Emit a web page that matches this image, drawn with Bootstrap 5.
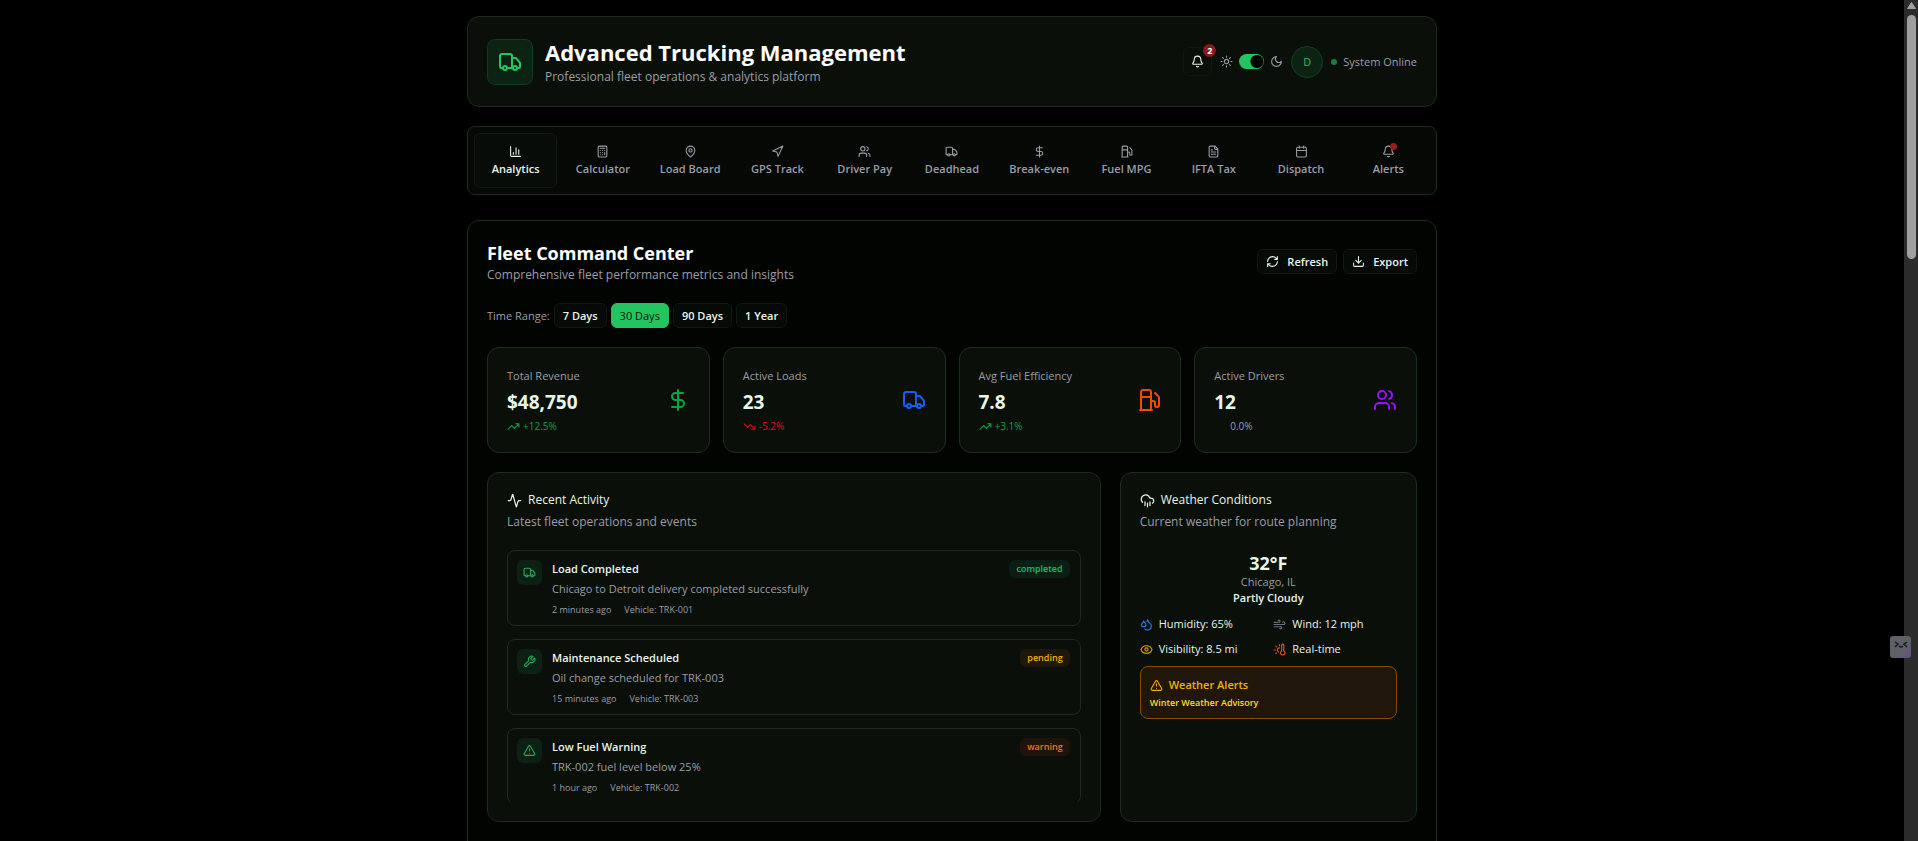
<!DOCTYPE html>
<html lang="en" data-bs-theme="dark">
<head>
<meta charset="utf-8">
<meta name="viewport" content="width=device-width, initial-scale=1">
<title>Advanced Trucking Management</title>
<link href="https://cdn.jsdelivr.net/npm/bootstrap@5.3.0/dist/css/bootstrap.min.css" rel="stylesheet">
<style>
  :root { --line:#1a2e1a; --panel:#0a0f0a; --ink:#e8f5e8; --dim:#9c9ca8; --go:#22c55e; }
  html { overflow:hidden; }
  body { background:#000; color:var(--ink); font-family:"Open Sans","Noto Sans",sans-serif; font-size:12px; line-height:16px; }
  .viewport { height:100vh; overflow:hidden; }
  .shell { max-width:970px; padding-top:16px; }
  .ico { width:13px; height:13px; flex:none; fill:none; stroke:currentColor; stroke-width:2; stroke-linecap:round; stroke-linejoin:round; display:block; }
  .ico-md { width:15px; height:15px; }
  .ico-lg { width:24px; height:24px; }
  .dim { color:var(--dim); }
  .semi { font-weight:600; }
  .medium { font-weight:500; }
  .t9 { font-size:9px; line-height:13px; }
  .t10 { font-size:10px; line-height:13px; }
  .t11 { font-size:11px; }
  .gap-ico { gap:6px; }
  .panel { background:var(--panel); border:1px solid var(--line); border-radius:12px; }
  .pad { padding:19px; }
  .top-bar { height:91px; padding:0 19px; }
  .brand { gap:12px; }
  .brand-sub { line-height:20px; }
  .tools { gap:8px; }
  .logo-box { width:46px; height:46px; background:#0c2213; border:1px solid #123a1f; border-radius:8px; color:var(--go); }
  .main-title { font-size:22px; line-height:30px; font-weight:700; margin:0; }
  .sec-title { font-size:18px; line-height:27px; font-weight:700; margin:0; }
  .ghost { display:flex; align-items:center; justify-content:center; height:25px; padding:0 8px; background:#050a07; border:1px solid #0e1a10; border-radius:6px; color:var(--ink); font-size:11px; line-height:16px; font-weight:600; }
  .ghost.chosen { background:var(--go); border-color:var(--go); color:#04140a; font-weight:400; }
  .ghost.with-icon { gap:8px; }
  .bell { width:29px; height:29px; padding:0; background:#0a0f0a; position:relative; }
  .count { position:absolute; top:-4px; right:-5px; width:13px; height:13px; border-radius:50%; background:#7f1d1d; color:#fff; font-size:9px; line-height:13px; font-weight:700; }
  .form-check-input.theme-switch { width:25px; height:15px; margin:0; float:none; border:0; box-shadow:none; border-radius:8px; background-color:var(--go); background-image:radial-gradient(circle at 18px 50%, #000 6px, transparent 7px) !important; }
  .avatar { width:32px; height:32px; border-radius:50%; background:#0c2213; border:1px solid #173d22; color:var(--go); font-size:11px; padding:0; }
  .dot { width:6px; height:6px; border-radius:50%; background:#15803d; }
  .tabs { background:#050805; border:1px solid var(--line); border-radius:8px; padding:6px; gap:4px; margin-top:19px; }
  .tabs .nav-link { flex:1 1 0; height:55px; padding:0; border:1px solid transparent; border-radius:6px; color:var(--dim); font-size:11px; line-height:16px; font-weight:600; display:flex; flex-direction:column; align-items:center; justify-content:center; gap:3px; white-space:nowrap; }
  .tabs .nav-link.active { background:#070c08; border-color:#0f1a10; color:var(--ink); }
  .ping { position:absolute; top:-2px; right:-2px; width:7px; height:7px; border-radius:50%; background:#9b1c1f; }
  .command { background:#020402; margin-top:25px; padding:19px 19px 80px; }
  .range { margin:20px 0 19px; gap:4px; }
  .stat { height:106px; padding:19px; }
  .stat-value { font-size:19px; line-height:22px; font-weight:700; margin:7px 0; }
  .trend { gap:3px; }
  .stats { --bs-gutter-x:13px; }
  .boards { --bs-gutter-x:19px; margin-top:19px; }
  .boards .panel { height:350px; }
  .board-sub { margin-top:6px; }
  .feed { height:252px; overflow:hidden; margin-top:20px; gap:13px; }
  .event { flex:none; height:76px; border:1px solid var(--line); border-radius:8px; padding:9px 10px 9px 9px; gap:10px; }
  .event-icon { width:25px; height:25px; border-radius:6px; background:#0c2013; color:#1fae55; flex:none; }
  .event-name { font-size:11px; line-height:18px; font-weight:600; }
  .event-text { font-size:11px; margin:3px 0 6px; color:var(--dim); }
  .event-meta { gap:13px; }
  .tag { height:18px; padding:0 7px; border-radius:6px; font-size:9px; line-height:18px; font-weight:600; }
  .tag-done { background:#0a1e13; color:#05c765; }
  .tag-wait { background:#1f170a; color:#f0b100; }
  .tag-warn { background:#20130a; color:#e87a05; }
  .now { margin-top:22px; }
  .temp { font-size:18px; line-height:22px; font-weight:700; }
  .readings { margin-top:10px; row-gap:9px; }
  .readings .second { padding-left:5px; }
  .alert-box { border:1px solid #894b00; border-radius:8px; background:#20170a; color:#f0b100; padding:10px 9px 9px; margin-top:9px; }
  .advisory { margin-top:3px; color:#fddc20; }
  .scroll-rail { width:14px; height:100vh; background:#2b2b2b; flex:none; padding:2px 3px 0 3px; }
  .scroll-thumb { width:9px; height:244px; border-radius:5px; background:#9f9f9f; margin-top:6px; }
  .buddy { position:fixed; right:7px; top:636px; width:21px; height:22px; border:0; padding:0; border-radius:3px; background:linear-gradient(135deg,#5d6166 55%,#6b4f86); color:#17191e; }
</style>
</head>
<body>
<svg class="d-none" xmlns="http://www.w3.org/2000/svg">
  <symbol id="truck" viewBox="0 0 24 24"><path d="M14 18V6a2 2 0 0 0-2-2H4a2 2 0 0 0-2 2v11a1 1 0 0 0 1 1h2M15 18H9M19 18h2a1 1 0 0 0 1-1v-3.65a1 1 0 0 0-.22-.624l-3.48-4.35A1 1 0 0 0 17.52 8H14"/><circle cx="17" cy="18" r="2"/><circle cx="7" cy="18" r="2"/></symbol>
  <symbol id="bell" viewBox="0 0 24 24"><path d="M10.268 21a2 2 0 0 0 3.464 0M3.262 15.326A1 1 0 0 0 4 17h16a1 1 0 0 0 .74-1.673C19.41 13.956 18 12.499 18 8A6 6 0 0 0 6 8c0 4.499-1.411 5.956-2.738 7.326"/></symbol>
  <symbol id="sun" viewBox="0 0 24 24"><circle cx="12" cy="12" r="4"/><path d="M12 2v2M12 20v2M4.93 4.93l1.41 1.41M17.66 17.66l1.41 1.41M2 12h2M20 12h2M6.34 17.66l-1.41 1.41M19.07 4.93l-1.41 1.41"/></symbol>
  <symbol id="moon" viewBox="0 0 24 24"><path d="M12 3a6 6 0 0 0 9 9 9 9 0 1 1-9-9Z"/></symbol>
  <symbol id="chart" viewBox="0 0 24 24"><path d="M3 3v16a2 2 0 0 0 2 2h16M18 17V9M13 17V5M8 17v-3"/></symbol>
  <symbol id="calc" viewBox="0 0 24 24"><rect width="16" height="20" x="4" y="2" rx="2"/><path d="M8 6h8M16 14v4M16 10h.01M12 10h.01M8 10h.01M12 14h.01M8 14h.01M12 18h.01M8 18h.01"/></symbol>
  <symbol id="pin" viewBox="0 0 24 24"><path d="M20 10c0 4.993-5.539 10.193-7.399 11.799a1 1 0 0 1-1.202 0C9.539 20.193 4 14.993 4 10a8 8 0 0 1 16 0"/><circle cx="12" cy="10" r="3"/></symbol>
  <symbol id="nav" viewBox="0 0 24 24"><path d="M3 11 22 2l-9 19-2-8-8-2z"/></symbol>
  <symbol id="users" viewBox="0 0 24 24"><path d="M16 21v-2a4 4 0 0 0-4-4H6a4 4 0 0 0-4 4v2M16 3.128a4 4 0 0 1 0 7.744M22 21v-2a4 4 0 0 0-3-3.87"/><circle cx="9" cy="7" r="4"/></symbol>
  <symbol id="dollar" viewBox="0 0 24 24"><path d="M12 2v20M17 5H9.5a3.5 3.5 0 0 0 0 7h5a3.5 3.5 0 0 1 0 7H6"/></symbol>
  <symbol id="fuel" viewBox="0 0 24 24"><path d="M3 22h12M4 9h10M14 22V4a2 2 0 0 0-2-2H6a2 2 0 0 0-2 2v18M14 13h2a2 2 0 0 1 2 2v2a2 2 0 0 0 4 0V9.83a2 2 0 0 0-.59-1.42L18 5"/></symbol>
  <symbol id="file" viewBox="0 0 24 24"><path d="M15 2H6a2 2 0 0 0-2 2v16a2 2 0 0 0 2 2h12a2 2 0 0 0 2-2V7ZM14 2v4a2 2 0 0 0 2 2h4M10 9H8M16 13H8M16 17H8"/></symbol>
  <symbol id="cal" viewBox="0 0 24 24"><path d="M8 2v4M16 2v4M3 10h18"/><rect width="18" height="18" x="3" y="4" rx="2"/></symbol>
  <symbol id="refresh" viewBox="0 0 24 24"><path d="M3 12a9 9 0 0 1 9-9 9.75 9.75 0 0 1 6.74 2.74L21 8M21 3v5h-5M21 12a9 9 0 0 1-9 9 9.75 9.75 0 0 1-6.74-2.74L3 16M8 16H3v5"/></symbol>
  <symbol id="download" viewBox="0 0 24 24"><path d="M21 15v4a2 2 0 0 1-2 2H5a2 2 0 0 1-2-2v-4M7 10l5 5 5-5M12 15V3"/></symbol>
  <symbol id="up" viewBox="0 0 24 24"><path d="M22 7l-8.5 8.5-5-5L2 17M16 7h6v6"/></symbol>
  <symbol id="down" viewBox="0 0 24 24"><path d="M22 17l-8.5-8.5-5 5L2 7M16 17h6v-6"/></symbol>
  <symbol id="pulse" viewBox="0 0 24 24"><path d="M22 12h-2.48a2 2 0 0 0-1.93 1.46l-2.35 8.36a.25.25 0 0 1-.48 0L9.24 2.18a.25.25 0 0 0-.48 0l-2.35 8.36A2 2 0 0 1 4.49 12H2"/></symbol>
  <symbol id="wrench" viewBox="0 0 24 24"><path d="M14.7 6.3a1 1 0 0 0 0 1.4l1.6 1.6a1 1 0 0 0 1.4 0l3.77-3.77a6 6 0 0 1-7.94 7.94l-6.91 6.91a2.12 2.12 0 0 1-3-3l6.91-6.91a6 6 0 0 1 7.94-7.94l-3.76 3.76z"/></symbol>
  <symbol id="warn" viewBox="0 0 24 24"><path d="m21.73 18-8-14a2 2 0 0 0-3.48 0l-8 14A2 2 0 0 0 4 21h16a2 2 0 0 0 1.73-3M12 9v4M12 17h.01"/></symbol>
  <symbol id="rain" viewBox="0 0 24 24"><path d="M4 14.899A7 7 0 1 1 15.71 8h1.79a4.5 4.5 0 0 1 2.5 8.242M16 14v6M8 14v6M12 16v6"/></symbol>
  <symbol id="drops" viewBox="0 0 24 24"><path d="M7 16.3c2.2 0 4-1.83 4-4.05 0-1.16-.57-2.26-1.71-3.19S7.29 6.75 7 5.3c-.29 1.45-1.14 2.84-2.29 3.76S3 11.1 3 12.25c0 2.22 1.8 4.05 4 4.05zM12.56 6.6A10.97 10.97 0 0 0 14 3.02c.5 2.5 2 4.9 4 6.5s3 3.5 3 5.5a6.98 6.98 0 0 1-11.91 4.97"/></symbol>
  <symbol id="wind" viewBox="0 0 24 24"><path d="M17.7 7.7a2.5 2.5 0 1 1 1.8 4.3H2M9.6 4.6A2 2 0 1 1 11 8H2M12.6 19.4A2 2 0 1 0 14 16H2"/></symbol>
  <symbol id="eye" viewBox="0 0 24 24"><path d="M2.062 12.348a1 1 0 0 1 0-.696 10.75 10.75 0 0 1 19.876 0 1 1 0 0 1 0 .696 10.75 10.75 0 0 1-19.876 0"/><circle cx="12" cy="12" r="3"/></symbol>
  <symbol id="thermo" viewBox="0 0 24 24"><path d="M12 9a4 4 0 0 0-2 7.5M12 3v2M6.6 18.4l-1.4 1.4M20 4v10.54a4 4 0 1 1-4 0V4a2 2 0 0 1 4 0ZM4 13H2M6.34 7.34 4.93 5.93"/></symbol>
</svg>

<div class="viewport d-flex">
  <div class="flex-grow-1 overflow-hidden">
    <div class="shell mx-auto">

      <header class="panel top-bar d-flex align-items-center justify-content-between">
        <div class="brand d-flex align-items-center">
          <div class="logo-box d-flex align-items-center justify-content-center"><svg class="ico ico-lg"><use href="#truck"/></svg></div>
          <div>
            <h1 class="main-title">Advanced Trucking Management</h1>
            <div class="dim brand-sub">Professional fleet operations &amp; analytics platform</div>
          </div>
        </div>
        <div class="tools d-flex align-items-center dim">
          <button type="button" class="ghost bell" aria-label="Notifications"><svg class="ico"><use href="#bell"/></svg><span class="count">2</span></button>
          <div class="d-flex align-items-center gap-ico">
            <svg class="ico"><use href="#sun"/></svg>
            <input class="form-check-input theme-switch" type="checkbox" role="switch" aria-label="Dark mode" checked>
            <svg class="ico"><use href="#moon"/></svg>
          </div>
          <button type="button" class="avatar">D</button>
          <div class="d-flex align-items-center gap-ico"><span class="dot"></span><span class="t11">System Online</span></div>
        </div>
      </header>

      <nav class="tabs nav flex-nowrap">
        <a class="nav-link active" href="#"><svg class="ico"><use href="#chart"/></svg>Analytics</a>
        <a class="nav-link" href="#"><svg class="ico"><use href="#calc"/></svg>Calculator</a>
        <a class="nav-link" href="#"><svg class="ico"><use href="#pin"/></svg>Load Board</a>
        <a class="nav-link" href="#"><svg class="ico"><use href="#nav"/></svg>GPS Track</a>
        <a class="nav-link" href="#"><svg class="ico"><use href="#users"/></svg>Driver Pay</a>
        <a class="nav-link" href="#"><svg class="ico"><use href="#truck"/></svg>Deadhead</a>
        <a class="nav-link" href="#"><svg class="ico"><use href="#dollar"/></svg>Break-even</a>
        <a class="nav-link" href="#"><svg class="ico"><use href="#fuel"/></svg>Fuel MPG</a>
        <a class="nav-link" href="#"><svg class="ico"><use href="#file"/></svg>IFTA Tax</a>
        <a class="nav-link" href="#"><svg class="ico"><use href="#cal"/></svg>Dispatch</a>
        <a class="nav-link" href="#"><span class="position-relative"><svg class="ico"><use href="#bell"/></svg><span class="ping"></span></span>Alerts</a>
      </nav>

      <main class="panel command">
        <div class="d-flex align-items-center justify-content-between">
          <div>
            <h2 class="sec-title">Fleet Command Center</h2>
            <div class="dim">Comprehensive fleet performance metrics and insights</div>
          </div>
          <div class="d-flex gap-ico">
            <button type="button" class="ghost with-icon"><svg class="ico"><use href="#refresh"/></svg>Refresh</button>
            <button type="button" class="ghost with-icon"><svg class="ico"><use href="#download"/></svg>Export</button>
          </div>
        </div>

        <div class="range d-flex align-items-center">
          <span class="dim t11">Time Range:</span>
          <button type="button" class="ghost">7 Days</button>
          <button type="button" class="ghost chosen">30 Days</button>
          <button type="button" class="ghost">90 Days</button>
          <button type="button" class="ghost">1 Year</button>
        </div>

        <div class="row stats">
          <div class="col-3"><div class="panel stat d-flex align-items-center justify-content-between">
            <div><div class="dim t11">Total Revenue</div><div class="stat-value">$48,750</div><div class="trend d-flex t10" style="color:#00a63e"><svg class="ico"><use href="#up"/></svg>+12.5%</div></div>
            <svg class="ico ico-lg" style="color:#00a63e"><use href="#dollar"/></svg></div></div>
          <div class="col-3"><div class="panel stat d-flex align-items-center justify-content-between">
            <div><div class="dim t11">Active Loads</div><div class="stat-value">23</div><div class="trend d-flex t10" style="color:#e7000b"><svg class="ico"><use href="#down"/></svg>-5.2%</div></div>
            <svg class="ico ico-lg" style="color:#155dfc"><use href="#truck"/></svg></div></div>
          <div class="col-3"><div class="panel stat d-flex align-items-center justify-content-between">
            <div><div class="dim t11">Avg Fuel Efficiency</div><div class="stat-value">7.8</div><div class="trend d-flex t10" style="color:#00a63e"><svg class="ico"><use href="#up"/></svg>+3.1%</div></div>
            <svg class="ico ico-lg" style="color:#f54900"><use href="#fuel"/></svg></div></div>
          <div class="col-3"><div class="panel stat d-flex align-items-center justify-content-between">
            <div><div class="dim t11">Active Drivers</div><div class="stat-value">12</div><div class="trend d-flex t10 dim"><span class="ico"></span>0.0%</div></div>
            <svg class="ico ico-lg" style="color:#9810fa"><use href="#users"/></svg></div></div>
        </div>

        <div class="row boards">
          <div class="col-8"><section class="panel pad">
            <div class="d-flex align-items-center medium gap-ico"><svg class="ico ico-md"><use href="#pulse"/></svg>Recent Activity</div>
            <div class="dim board-sub">Latest fleet operations and events</div>
            <div class="feed d-flex flex-column">
              <div class="event d-flex">
                <div class="event-icon d-flex align-items-center justify-content-center"><svg class="ico"><use href="#truck"/></svg></div>
                <div class="flex-grow-1"><div class="event-name">Load Completed</div><div class="event-text">Chicago to Detroit delivery completed successfully</div><div class="event-meta t9 dim d-flex"><span>2 minutes ago</span><span>Vehicle: TRK-001</span></div></div>
                <span class="tag tag-done">completed</span>
              </div>
              <div class="event d-flex">
                <div class="event-icon d-flex align-items-center justify-content-center"><svg class="ico"><use href="#wrench"/></svg></div>
                <div class="flex-grow-1"><div class="event-name">Maintenance Scheduled</div><div class="event-text">Oil change scheduled for TRK-003</div><div class="event-meta t9 dim d-flex"><span>15 minutes ago</span><span>Vehicle: TRK-003</span></div></div>
                <span class="tag tag-wait">pending</span>
              </div>
              <div class="event d-flex">
                <div class="event-icon d-flex align-items-center justify-content-center"><svg class="ico"><use href="#warn"/></svg></div>
                <div class="flex-grow-1"><div class="event-name">Low Fuel Warning</div><div class="event-text">TRK-002 fuel level below 25%</div><div class="event-meta t9 dim d-flex"><span>1 hour ago</span><span>Vehicle: TRK-002</span></div></div>
                <span class="tag tag-warn">warning</span>
              </div>
            </div>
          </section></div>
          <div class="col-4"><section class="panel pad">
            <div class="d-flex align-items-center medium gap-ico"><svg class="ico ico-md"><use href="#rain"/></svg>Weather Conditions</div>
            <div class="dim board-sub">Current weather for route planning</div>
            <div class="now text-center">
              <div class="temp">32°F</div>
              <div class="dim t11">Chicago, IL</div>
              <div class="semi t11">Partly Cloudy</div>
            </div>
            <div class="readings row gx-0 t11">
              <div class="col-6 d-flex align-items-center gap-ico"><svg class="ico" style="color:#2b7fff"><use href="#drops"/></svg>Humidity: 65%</div>
              <div class="col-6 d-flex align-items-center gap-ico second"><svg class="ico" style="color:#6a7282"><use href="#wind"/></svg>Wind: 12 mph</div>
              <div class="col-6 d-flex align-items-center gap-ico"><svg class="ico" style="color:#d9a400"><use href="#eye"/></svg>Visibility: 8.5 mi</div>
              <div class="col-6 d-flex align-items-center gap-ico second"><svg class="ico" style="color:#f05a00"><use href="#thermo"/></svg>Real-time</div>
            </div>
            <div class="alert-box">
              <div class="d-flex align-items-center semi t11 gap-ico"><svg class="ico"><use href="#warn"/></svg>Weather Alerts</div>
              <div class="advisory t9 semi">Winter Weather Advisory</div>
            </div>
          </section></div>
        </div>
      </main>
    </div>
  </div>
  <div class="scroll-rail">
    <svg width="9" height="7" viewBox="0 0 9 7" class="d-block"><path d="M4.500 0.500 8.500 6.500H.5Z" fill="#9f9f9f" stroke="#9f9f9f" stroke-linejoin="round"/></svg>
    <div class="scroll-thumb"></div>
  </div>
</div>
<button type="button" class="buddy" aria-label="Assistant"><svg class="d-block" width="21" height="22" viewBox="0 0 21 22" fill="none" stroke="currentColor" stroke-width="1.500"><path d="M5 6l3 2-3 3M17 6l-3 2 3 3M9 10q2 2 4 0"/></svg></button>
<script src="https://cdn.jsdelivr.net/npm/bootstrap@5.3.0/dist/js/bootstrap.bundle.min.js"></script>
</body>
</html>
